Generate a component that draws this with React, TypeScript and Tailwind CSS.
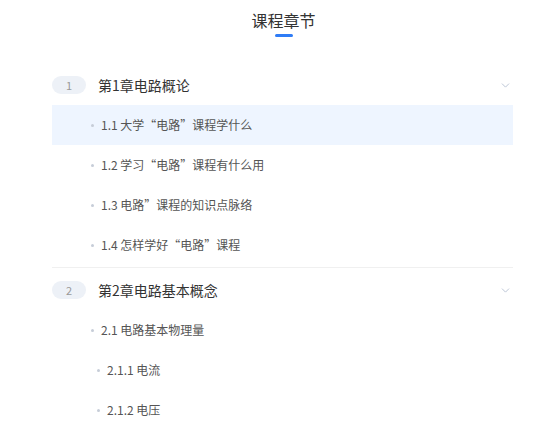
import { ChevronDown } from "lucide-react";

type Section = {
  label: string;
  depth?: number;
  active?: boolean;
};

type Chapter = {
  no: number;
  title: string;
  sections: Section[];
};

const chapters: Chapter[] = [
  {
    no: 1,
    title: "第1章电路概论",
    sections: [
      { label: "1.1 大学“电路”课程学什么", active: true },
      { label: "1.2 学习“电路”课程有什么用" },
      { label: "1.3 电路”课程的知识点脉络" },
      { label: "1.4 怎样学好“电路”课程" },
    ],
  },
  {
    no: 2,
    title: "第2章电路基本概念",
    sections: [
      { label: "2.1 电路基本物理量" },
      { label: "2.1.1 电流", depth: 1 },
      { label: "2.1.2 电压", depth: 1 },
    ],
  },
];

const SectionRow = ({ section }: { section: Section }) => (
  <div
    className={
      "flex h-10 items-center text-[12px] text-[#555] " +
      (section.active ? "bg-[#eef5ff]" : "")
    }
  >
    <span
      className={
        "h-[3px] w-[3px] rounded-full bg-[#c6cdd8] " +
        (section.depth ? "ml-[45px]" : "ml-[39px]")
      }
    />
    <span className="ml-[7px]">{section.label}</span>
  </div>
);

const ChapterBlock = ({ chapter, last }: { chapter: Chapter; last: boolean }) => (
  <div className={last ? "pt-[2px]" : "border-b border-[#f0f0f0] pb-[2px]"}>
    <div className="flex h-10 items-center">
      <span className="flex h-[18px] w-[34px] items-center justify-center rounded-full bg-[#edf1f7] text-[11px] text-[#999]">
        {chapter.no}
      </span>
      <span className="ml-[12px] flex-1 text-[14px] text-[#333]">{chapter.title}</span>
      <ChevronDown className="mr-[1px] h-[13px] w-[13px] text-[#b9c3d4]" strokeWidth={1.75} />
    </div>
    {chapter.sections.map((s) => (
      <SectionRow key={s.label} section={s} />
    ))}
  </div>
);

export default function App() {
  return (
    <div
      className="h-[427px] w-[539px] overflow-hidden bg-white"
      style={{ fontFamily: '"Noto Sans CJK SC", "Noto Sans", sans-serif' }}
    >
      <div className="flex flex-col items-center pt-[9px]">
        <h2 className="ml-[28px] text-[16px] leading-[22px] text-[#333]">课程章节</h2>
        <span className="ml-[28px] mt-[3px] h-[3px] w-[18px] rounded-full bg-[#2f7cf6]" />
      </div>
      <div className="ml-[52px] mt-[28px] w-[461px]">
        {chapters.map((c, i) => (
          <ChapterBlock key={c.no} chapter={c} last={i === chapters.length - 1} />
        ))}
      </div>
    </div>
  );
}
